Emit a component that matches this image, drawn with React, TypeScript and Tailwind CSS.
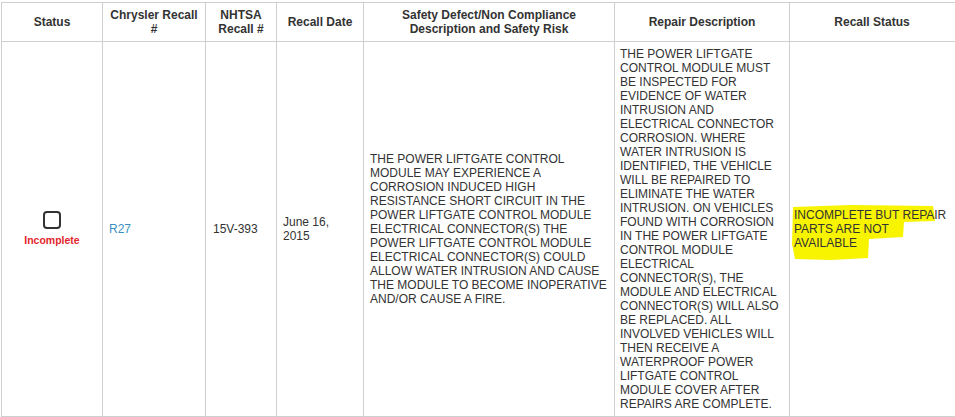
const repair =
  "THE POWER LIFTGATE CONTROL MODULE MUST BE INSPECTED FOR EVIDENCE OF WATER INTRUSION AND ELECTRICAL CONNECTOR CORROSION. WHERE WATER INTRUSION IS IDENTIFIED, THE VEHICLE WILL BE REPAIRED TO ELIMINATE THE WATER INTRUSION. ON VEHICLES FOUND WITH CORROSION IN THE POWER LIFTGATE CONTROL MODULE ELECTRICAL CONNECTOR(S), THE MODULE AND ELECTRICAL CONNECTOR(S) WILL ALSO BE REPLACED. ALL INVOLVED VEHICLES WILL THEN RECEIVE A WATERPROOF POWER LIFTGATE CONTROL MODULE COVER AFTER REPAIRS ARE COMPLETE.";

const defect =
  "THE POWER LIFTGATE CONTROL MODULE MAY EXPERIENCE A CORROSION INDUCED HIGH RESISTANCE SHORT CIRCUIT IN THE POWER LIFTGATE CONTROL MODULE ELECTRICAL CONNECTOR(S) THE POWER LIFTGATE CONTROL MODULE ELECTRICAL CONNECTOR(S) COULD ALLOW WATER INTRUSION AND CAUSE THE MODULE TO BECOME INOPERATIVE AND/OR CAUSE A FIRE.";

const th = "border border-[#cfcfcf] px-[5px] align-middle text-center font-bold text-[#333]";
const td = "border border-[#cfcfcf] px-[6px] align-middle text-left text-[#333]";

export default function App() {
  return (
    <div className="w-[955px] h-[417px] overflow-hidden bg-white pt-[2px] pl-[1px] font-['Liberation_Sans',Arial,sans-serif] text-[12px] leading-[14px]">
      <table className="table-fixed border-collapse w-[966px]">
        <colgroup>
          <col className="w-[101px]" />
          <col className="w-[103px]" />
          <col className="w-[71px]" />
          <col className="w-[87px]" />
          <col className="w-[251px]" />
          <col className="w-[175px]" />
          <col className="w-[178px]" />
        </colgroup>
        <thead>
          <tr className="h-[39px]">
            <th className={th}>Status</th>
            <th className={th}>Chrysler Recall #</th>
            <th className={th}>NHTSA Recall #</th>
            <th className={th}>Recall Date</th>
            <th className={th}>Safety Defect/Non Compliance Description and Safety Risk</th>
            <th className={th}>Repair Description</th>
            <th className={th + " pr-[18px]"}>Recall Status</th>
          </tr>
        </thead>
        <tbody>
          <tr className="h-[375px]">
            <td className={td + " text-center"}>
              <div className="flex flex-col items-center">
                <div className="w-[18px] h-[18px] border-2 border-[#333] rounded-[4px]" />
                <span className="mt-[4px] text-[10.5px] font-bold text-[#e3262b]">Incomplete</span>
              </div>
            </td>
            <td className={td}>
              <a href="#" className="text-[#3a8fc0]">R27</a>
            </td>
            <td className={td + " pl-[7px]"}>15V-393</td>
            <td className={td + " pr-[8px]"}>June 16, 2015</td>
            <td className={td}>{defect}</td>
            <td className={td + " pl-[5px] py-[4px]"}>{repair}</td>
            <td className={td + " pl-[4px] pr-[16px]"}>
              <div className="relative">
                {/* highlighter stroke */}
                <svg className="absolute left-[-3px] top-[-4px] w-[150px] h-[58px]" viewBox="0 0 150 58">
                  <path
                    d="M2 3 L60 1 L142 2 L144 17 L113 18 L112 33 L78 35 L77 54 L40 56 L4 55 L1 40 Z"
                    fill="#f8f400"
                  />
                </svg>
                <div className="relative">INCOMPLETE BUT REPAIR PARTS ARE NOT AVAILABLE</div>
              </div>
            </td>
          </tr>
        </tbody>
      </table>
    </div>
  );
}
